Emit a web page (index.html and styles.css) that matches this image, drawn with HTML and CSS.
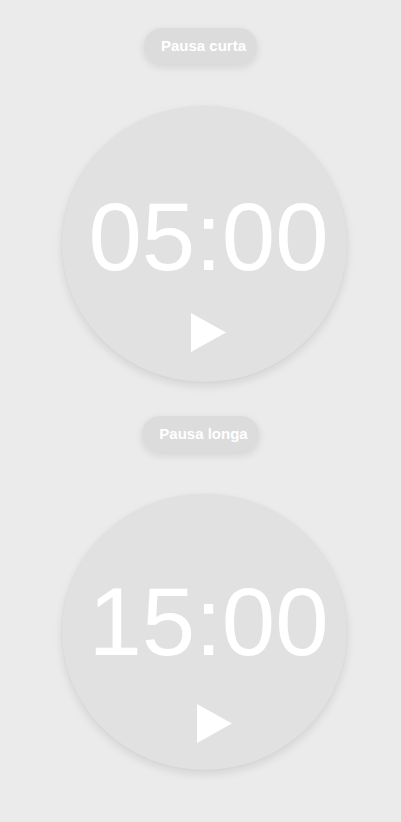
FILE: index.html
```html
<!DOCTYPE html>
<html lang="pt">
<head>
<meta charset="utf-8">
<title>Timer</title>
<link rel="stylesheet" href="styles.css">
</head>
<body>
<main class="page">
  <section class="timer">
    <button class="label">Pausa curta</button>
    <div class="dial">
      <div class="time">05:00</div>
      <button class="play" aria-label="Iniciar">
        <svg width="35" height="39" viewBox="0 0 35 39"><polygon points="0,0 35,19.5 0,39" fill="#ffffff"/></svg>
      </button>
    </div>
  </section>
  <section class="timer">
    <button class="label">Pausa longa</button>
    <div class="dial dial-long">
      <div class="time">15:00</div>
      <button class="play play-long" aria-label="Iniciar">
        <svg width="35" height="39" viewBox="0 0 35 39"><polygon points="0,0 35,19.5 0,39" fill="#ffffff"/></svg>
      </button>
    </div>
  </section>
</main>
</body>
</html>
```

FILE: styles.css
```css
html, body {
  margin: 0;
  padding: 0;
  background: #ebebeb;
}
body {
  font-family: "Liberation Sans", Arial, sans-serif;
  width: 401px;
  height: 822px;
  overflow: hidden;
}
.page {
  display: flex;
  flex-direction: column;
  align-items: center;
  padding-top: 28px;
  gap: 34px;
}
.timer {
  display: flex;
  flex-direction: column;
  align-items: center;
  gap: 42px;
}
.label {
  height: 36px;
  padding: 0 11px 0 17px;
  border: none;
  border-radius: 18px;
  background: #dcdcdc;
  color: #ffffff;
  font-family: "Liberation Sans", Arial, sans-serif;
  font-weight: bold;
  font-size: 15px;
  line-height: 36px;
  box-shadow: 0 3px 8px rgba(0, 0, 0, 0.10);
  cursor: pointer;
}
.dial {
  width: 285px;
  height: 276px;
  box-sizing: border-box;
  margin-left: 8px;
  border-radius: 50%;
  background: #e1e1e1;
  box-shadow: 0 4px 10px rgba(0, 0, 0, 0.10), 0 0 2px rgba(0, 0, 0, 0.05);
  display: flex;
  flex-direction: column;
  align-items: center;
  padding-top: 83px;
  padding-left: 8px;
}
.dial-long {
  padding-top: 80px;
}
.time {
  color: #ffffff;
  font-size: 96px;
  line-height: 96px;
  height: 96px;
  letter-spacing: 0;
}
.play {
  margin-top: 28px;
  padding: 0;
  border: none;
  background: none;
  width: 35px;
  height: 39px;
  display: block;
  cursor: pointer;
}
.play svg {
  display: block;
}
.play-long {
  margin-top: 34px;
  margin-left: 12px;
}
```
